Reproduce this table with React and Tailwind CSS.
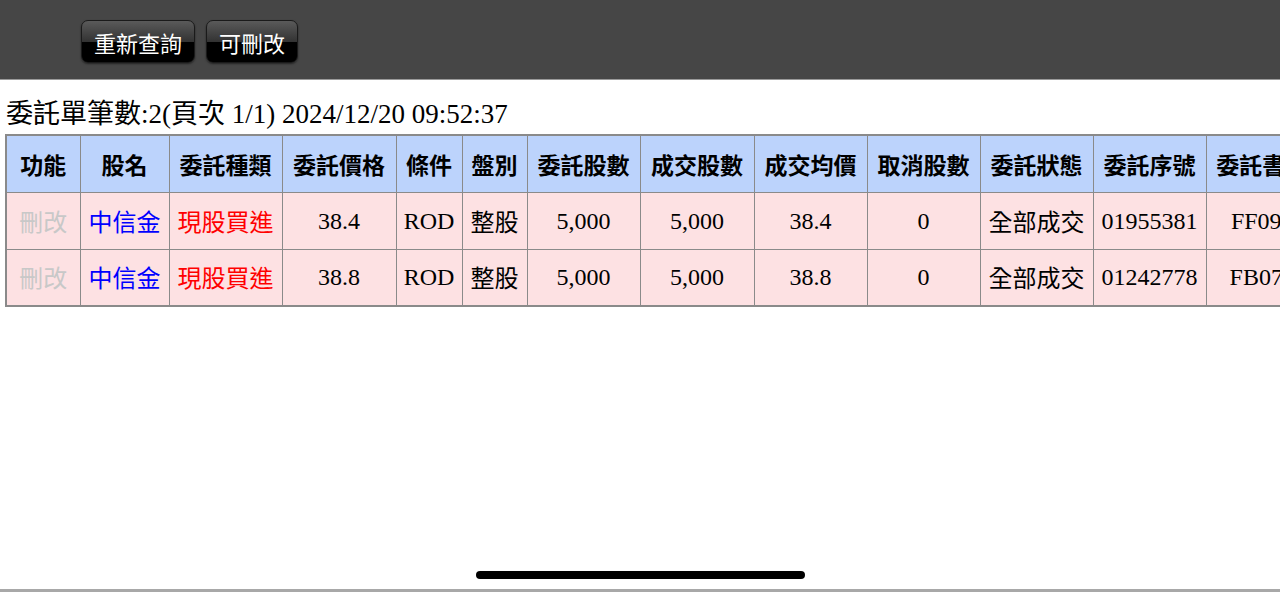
import React from "react";

const serif = "font-['Liberation_Serif','Noto_Sans_CJK_TC',serif]";
const sans = "font-['Noto_Sans_CJK_TC','Liberation_Sans',sans-serif]";

const columns = [
  { label: "功能", w: "w-[74px]" },
  { label: "股名", w: "w-[89px]" },
  { label: "委託種類", w: "w-[113px]" },
  { label: "委託價格", w: "w-[114px]" },
  { label: "條件", w: "w-[66px]" },
  { label: "盤別", w: "w-[65px]" },
  { label: "委託股數", w: "w-[113px]" },
  { label: "成交股數", w: "w-[114px]" },
  { label: "成交均價", w: "w-[113px]" },
  { label: "取消股數", w: "w-[113px]" },
  { label: "委託狀態", w: "w-[113px]" },
  { label: "委託序號", w: "w-[113px]" },
  { label: "委託書號", w: "w-[113px]" },
];

const rows = [
  { price: "38.4", avg: "38.4", seq: "01955381", book: "FF095" },
  { price: "38.8", avg: "38.8", seq: "01242778", book: "FB073" },
];

const TopButton = ({ children }) => (
  <button
    className={`h-[43px] px-[12px] rounded-[7px] border border-[#1a1a1a] text-white text-[22px] leading-none ${sans} bg-[linear-gradient(to_bottom,#5a5a5a_0%,#333_50%,#000_50%,#000_100%)] shadow-[0_1px_2px_rgba(0,0,0,0.5)]`}
  >
    {children}
  </button>
);

const Cell = ({ children, className = "" }) => (
  <td className={`h-[57px] border border-[#8a8a8a] text-center whitespace-nowrap overflow-hidden px-[2px] text-[24px] ${className}`}>
    {children}
  </td>
);

export default function App() {
  return (
    <div className="relative w-[1280px] h-[592px] bg-white overflow-hidden">
      <div className="h-[80px] bg-[#464646] border-b border-[#9a9a9a] flex items-start gap-[11px] pl-[81px] pt-[20px]">
        <TopButton>重新查詢</TopButton>
        <TopButton>可刪改</TopButton>
      </div>

      <div className={`pl-[6px] pt-[14px] text-[27px] leading-[36px] text-black whitespace-nowrap ${serif}`}>
        <span className={sans}>委託單筆數</span>:2(<span className={sans}>頁次</span> 1/1) 2024/12/20 09:52:37
      </div>

      <div className="pl-[5px] pt-[2px] overflow-hidden">
        <table className="border-collapse border-2 border-[#8a8a8a] table-fixed w-[1313px]">
          <thead>
            <tr className="bg-[#bcd3fc]">
              {columns.map((c) => (
                <th
                  key={c.label}
                  className={`${c.w} h-[57px] border border-[#8a8a8a] text-[23px] font-bold whitespace-nowrap overflow-hidden px-0 text-black ${sans}`}
                >
                  {c.label}
                </th>
              ))}
            </tr>
          </thead>
          <tbody>
            {rows.map((r) => (
              <tr key={r.seq} className="bg-[#fde1e3]">
                <Cell className={`text-[#c8c8c8] ${sans}`}>刪改</Cell>
                <Cell className={`text-[#0000ff] ${sans}`}>中信金</Cell>
                <Cell className={`text-[#ff0000] ${sans}`}>現股買進</Cell>
                <Cell className={serif}>{r.price}</Cell>
                <Cell className={serif}>ROD</Cell>
                <Cell className={sans}>整股</Cell>
                <Cell className={serif}>5,000</Cell>
                <Cell className={serif}>5,000</Cell>
                <Cell className={serif}>{r.avg}</Cell>
                <Cell className={serif}>0</Cell>
                <Cell className={sans}>全部成交</Cell>
                <Cell className={serif}>{r.seq}</Cell>
                <Cell className={serif}>{r.book}</Cell>
              </tr>
            ))}
          </tbody>
        </table>
      </div>

      {/* home indicator */}
      <div className="absolute left-[476px] top-[571px] w-[329px] h-[8px] rounded-full bg-black" />
      <div className="absolute left-0 bottom-0 w-full h-[3px] bg-[#a8a8a8]" />
    </div>
  );
}
